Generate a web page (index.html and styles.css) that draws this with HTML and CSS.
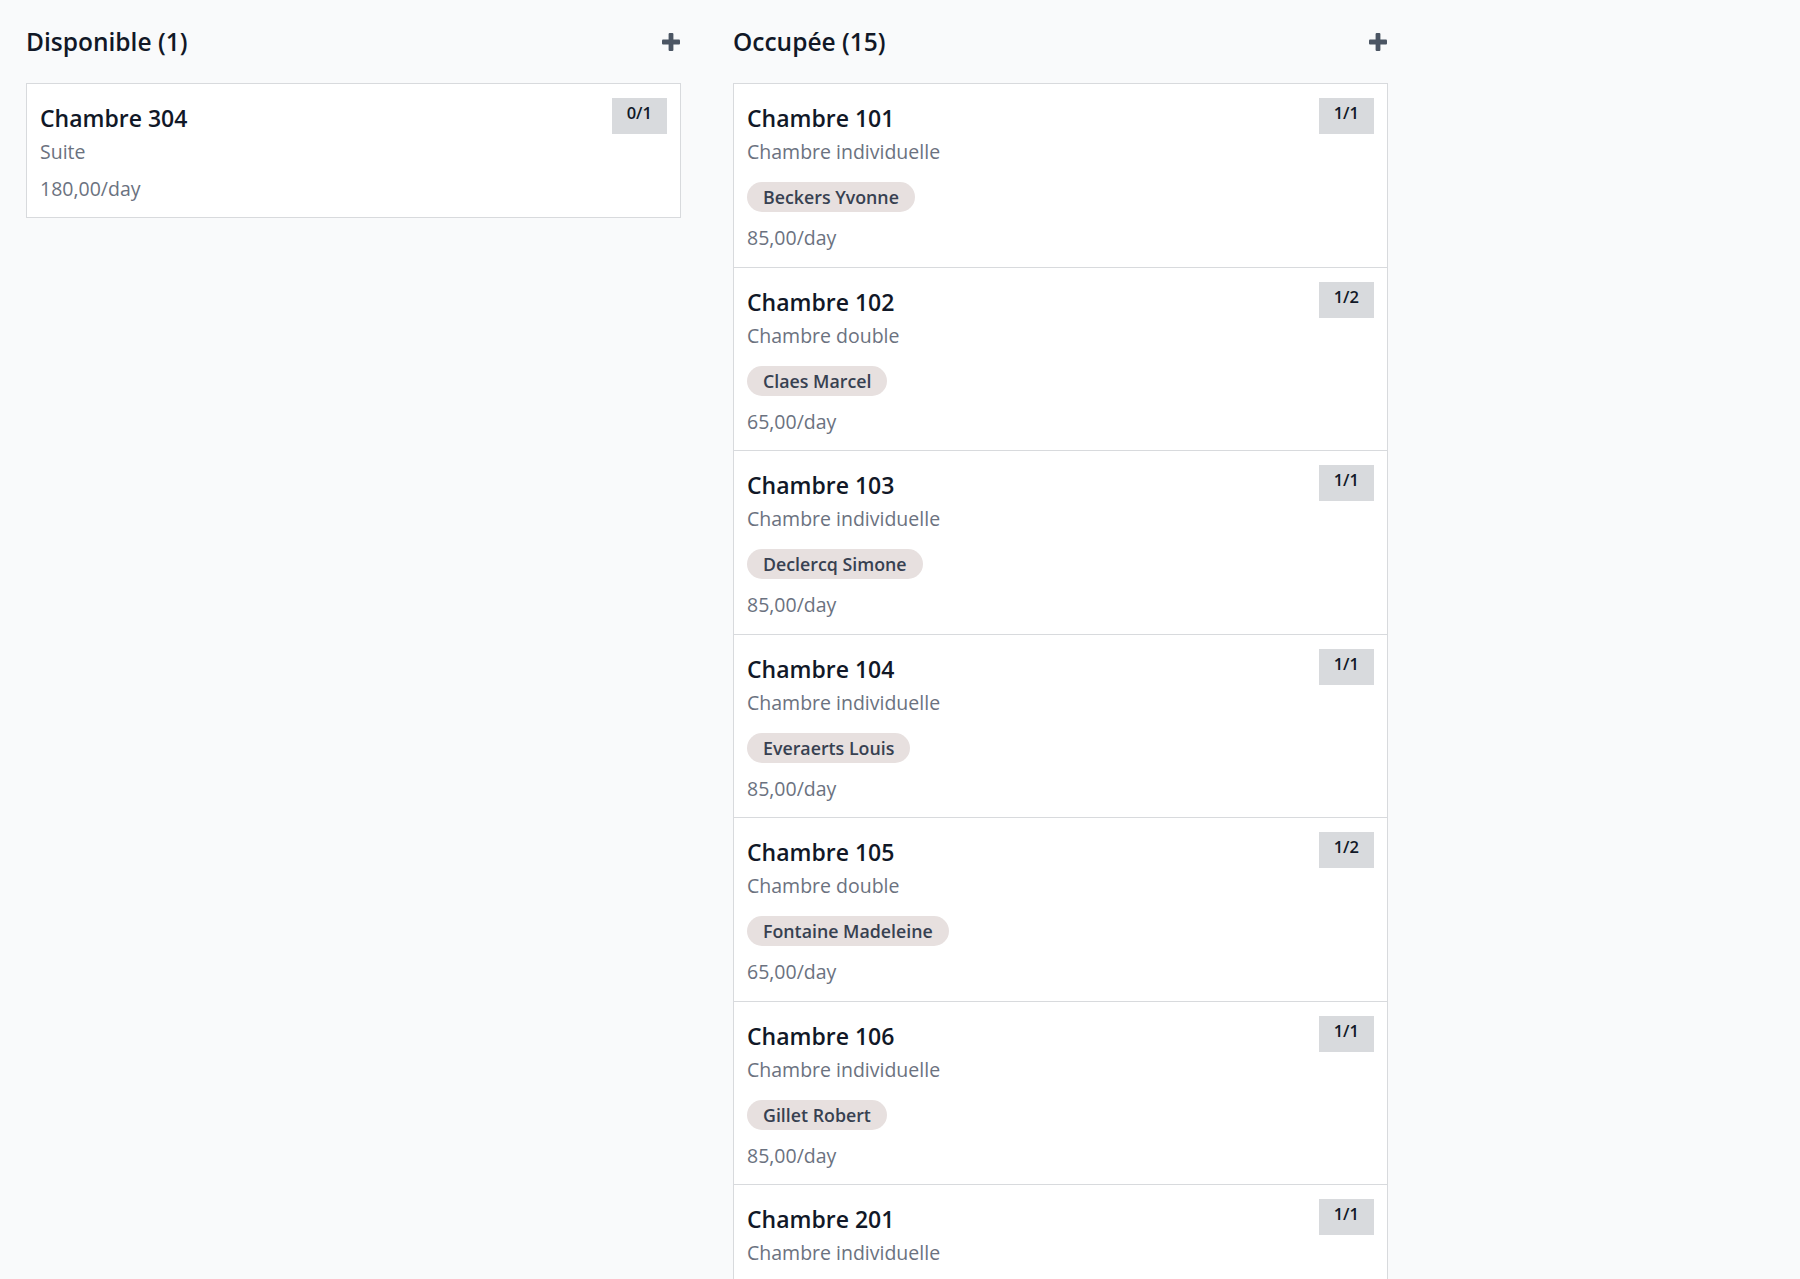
FILE: index.html
```html
<!DOCTYPE html>
<html>
<head>
  <meta charset="utf-8">
  <title>Chambres</title>
  <link rel="stylesheet" href="styles.css">
</head>
<body>
  <div class="kanban">

    <div class="column">
      <div class="column-header">
        <h2>Disponible (1)</h2>
        <button class="add" title="Ajouter">
          <svg width="18" height="18" viewBox="0 0 18 18"><rect x="6.6" y="0" width="4.8" height="18" rx="1"/><rect x="0" y="6.6" width="18" height="4.8" rx="1"/></svg>
        </button>
      </div>
      <div class="cards">
        <div class="card">
          <div class="card-top">
            <div class="card-title">Chambre 304</div>
            <span class="count">0/1</span>
          </div>
          <div class="card-type">Suite</div>
          <div class="card-price">180,00/day</div>
        </div>
      </div>
    </div>

    <div class="column">
      <div class="column-header">
        <h2>Occupée (15)</h2>
        <button class="add" title="Ajouter">
          <svg width="18" height="18" viewBox="0 0 18 18"><rect x="6.6" y="0" width="4.8" height="18" rx="1"/><rect x="0" y="6.6" width="18" height="4.8" rx="1"/></svg>
        </button>
      </div>
      <div class="cards">
        <div class="card">
          <div class="card-top">
            <div class="card-title">Chambre 101</div>
            <span class="count">1/1</span>
          </div>
          <div class="card-type">Chambre individuelle</div>
          <div class="card-tags"><span class="tag">Beckers Yvonne</span></div>
          <div class="card-price">85,00/day</div>
        </div>
        <div class="card">
          <div class="card-top">
            <div class="card-title">Chambre 102</div>
            <span class="count">1/2</span>
          </div>
          <div class="card-type">Chambre double</div>
          <div class="card-tags"><span class="tag">Claes Marcel</span></div>
          <div class="card-price">65,00/day</div>
        </div>
        <div class="card">
          <div class="card-top">
            <div class="card-title">Chambre 103</div>
            <span class="count">1/1</span>
          </div>
          <div class="card-type">Chambre individuelle</div>
          <div class="card-tags"><span class="tag">Declercq Simone</span></div>
          <div class="card-price">85,00/day</div>
        </div>
        <div class="card">
          <div class="card-top">
            <div class="card-title">Chambre 104</div>
            <span class="count">1/1</span>
          </div>
          <div class="card-type">Chambre individuelle</div>
          <div class="card-tags"><span class="tag">Everaerts Louis</span></div>
          <div class="card-price">85,00/day</div>
        </div>
        <div class="card">
          <div class="card-top">
            <div class="card-title">Chambre 105</div>
            <span class="count">1/2</span>
          </div>
          <div class="card-type">Chambre double</div>
          <div class="card-tags"><span class="tag">Fontaine Madeleine</span></div>
          <div class="card-price">65,00/day</div>
        </div>
        <div class="card">
          <div class="card-top">
            <div class="card-title">Chambre 106</div>
            <span class="count">1/1</span>
          </div>
          <div class="card-type">Chambre individuelle</div>
          <div class="card-tags"><span class="tag">Gillet Robert</span></div>
          <div class="card-price">85,00/day</div>
        </div>
        <div class="card">
          <div class="card-top">
            <div class="card-title">Chambre 201</div>
            <span class="count">1/1</span>
          </div>
          <div class="card-type">Chambre individuelle</div>
          <div class="card-tags"><span class="tag">Hermans Lucie</span></div>
          <div class="card-price">85,00/day</div>
        </div>
      </div>
    </div>

  </div>
</body>
</html>
```

FILE: styles.css
```css
html, body {
  margin: 0;
  height: 100%;
}

body {
  font-family: "Open Sans", "Noto Sans", sans-serif;
  background: #f9fafb;
  color: #111827;
  overflow: hidden;
}

.kanban {
  display: flex;
  align-items: flex-start;
  gap: 52px;
  padding-left: 26px;
}

.column {
  width: 655px;
  flex-shrink: 0;
}

.column-header {
  display: flex;
  justify-content: space-between;
  align-items: center;
  height: 83px;
  padding-right: 1px;
}

.column-header h2 {
  margin: 0;
  font-size: 24.5px;
  font-weight: 600;
  color: #111827;
}

.add {
  display: flex;
  padding: 0;
  border: none;
  background: none;
  fill: #4b5563;
  cursor: pointer;
}

.card {
  background: #fff;
  border: 1px solid #d8dadd;
  padding: 14px 13px;
}

.card + .card {
  margin-top: -1px;
}

.card-top {
  display: flex;
  justify-content: space-between;
  align-items: flex-start;
}

.card-title {
  font-size: 23px;
  font-weight: 600;
  line-height: 39px;
  margin-top: 1px;
  color: #111827;
}

.count {
  background: #d8dadd;
  font-size: 16.5px;
  font-weight: 600;
  line-height: 24px;
  padding: 3px 15px 9px;
  color: #111827;
}

.card-type,
.card-price {
  font-size: 19.5px;
  line-height: 1.5;
  color: #6b7280;
}

.card-type {
  margin-top: -1px;
}

.card-price {
  margin-top: 7.5px;
}

.card-tags {
  margin: 16px 0 11px;
  display: flex;
  gap: 6px;
}

.tag {
  background: #e7e0df;
  color: #374151;
  font-size: 17.8px;
  font-weight: 600;
  height: 30px;
  line-height: 30px;
  padding: 0 16px;
  border-radius: 15px;
}
```
